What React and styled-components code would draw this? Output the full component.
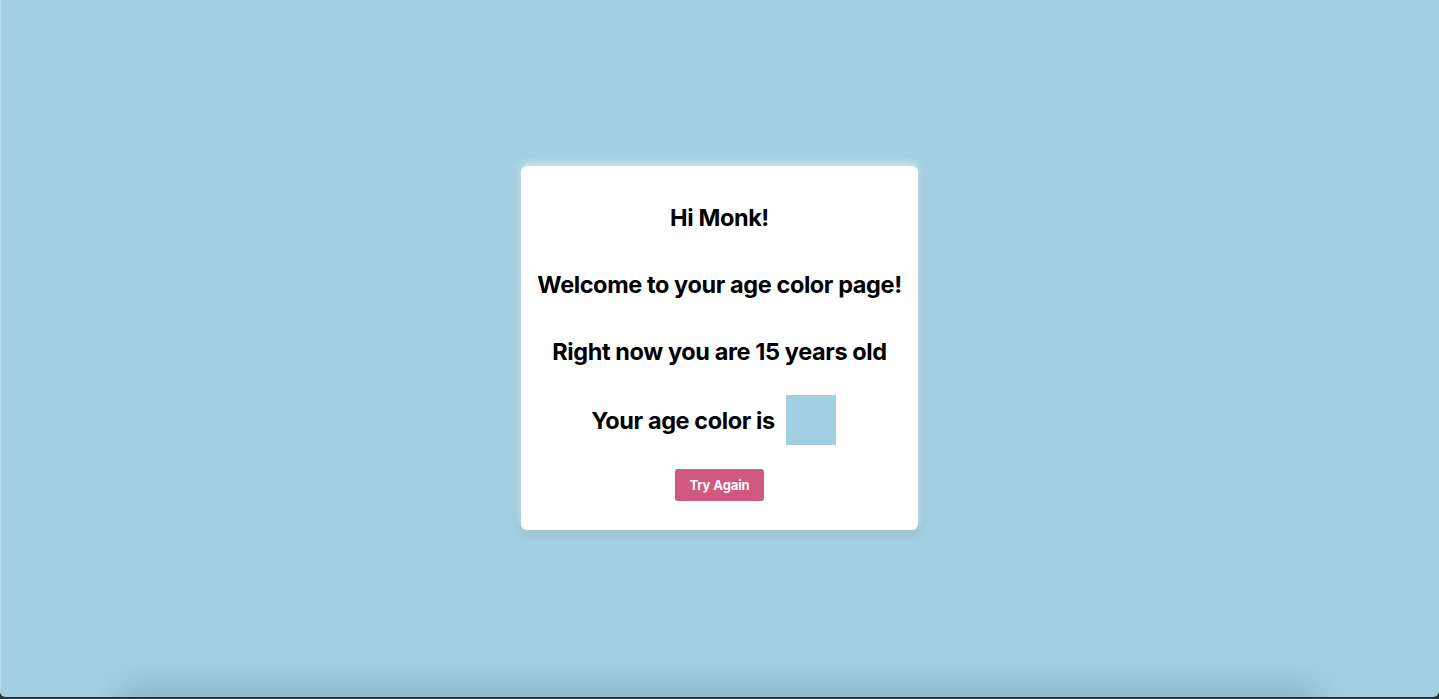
import React from "react";
import styled, { createGlobalStyle } from "styled-components";

const GlobalStyle = createGlobalStyle`
  html, body {
    margin: 0;
    padding: 0;
    background: #2c3438;
    font-family: "Inter", "Liberation Sans", sans-serif;
    overflow: hidden;
  }
`;

const Screen = styled.div`
  position: relative;
  height: 697px;
  background: #a2cfe1;
  box-shadow: inset 1px 0 0 #b4d9e8;
  border-radius: 0 0 6px 6px;
  display: flex;
  justify-content: center;
  align-items: flex-start;
  overflow: hidden;

  /* soft shadow of the dock-like strip along the bottom edge */
  &::after {
    content: "";
    position: absolute;
    left: 128px;
    right: 128px;
    bottom: -30px;
    height: 30px;
    box-shadow: 0 0 36px 6px rgba(40, 80, 100, 0.28);
  }
`;

const Card = styled.div`
  margin-top: 166px;
  width: 397px;
  box-sizing: border-box;
  padding: 37px 12px 29px;
  background: #ffffff;
  border-radius: 6px;
  box-shadow: 0 -2px 8px rgba(255, 255, 255, 0.7),
    0 3px 8px rgba(30, 70, 90, 0.22);
  display: flex;
  flex-direction: column;
  align-items: center;
`;

const Title = styled.h2`
  margin: ${(p) => (p.$first ? "0" : "38px")} 0 0;
  font-size: 23.5px;
  line-height: 29px;
  letter-spacing: -0.4px;
  font-weight: 700;
  color: #000;
  text-align: center;
  white-space: nowrap;
`;

const ColorRow = styled.div`
  margin-top: 29px;
  display: flex;
  align-items: center;
  gap: 11px;
`;

const Swatch = styled.div`
  width: 50px;
  height: 50px;
  margin-right: 12px;
  background: ${(p) => p.$color};
`;

const Button = styled.button`
  margin-top: 24px;
  width: 89px;
  height: 32px;
  border: none;
  border-radius: 3px;
  background: #d1587f;
  color: #fff;
  font-family: "Inter", "Liberation Sans", sans-serif;
  font-size: 13px;
  font-weight: 700;
  letter-spacing: -0.1px;
  cursor: pointer;
`;

const App = () => {
  const name = "Monk";
  const age = 15;
  const ageColor = "#a2cfe1";

  return (
    <>
      <GlobalStyle />
      <Screen>
        <Card>
          <Title $first>Hi {name}!</Title>
          <Title>Welcome to your age color page!</Title>
          <Title>Right now you are {age} years old</Title>
          <ColorRow>
            <Title $first>Your age color is</Title>
            <Swatch $color={ageColor} />
          </ColorRow>
          <Button>Try Again</Button>
        </Card>
      </Screen>
    </>
  );
};

export default App;
